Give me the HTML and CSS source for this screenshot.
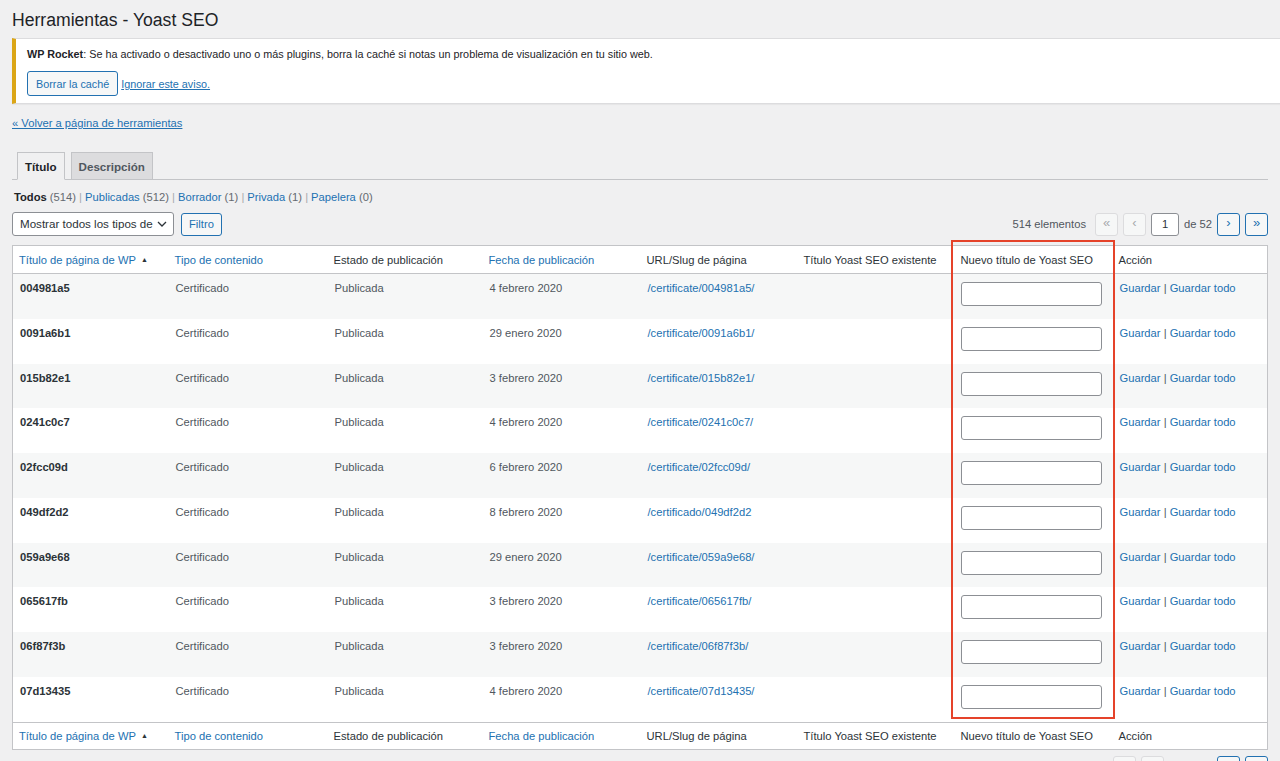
FILE: index.html
```html
<!DOCTYPE html>
<html lang="es">
<head>
<meta charset="utf-8">
<title>Herramientas - Yoast SEO</title>
<link rel="stylesheet" href="styles.css">
</head>
<body>
<div class="wrap">
  <h1 class="page-title">Herramientas - Yoast SEO</h1>

  <div class="notice">
    <p class="notice-text"><strong>WP Rocket</strong>: Se ha activado o desactivado uno o más plugins, borra la caché si notas un problema de visualización en tu sitio web.</p>
    <div class="notice-actions">
      <a class="button" href="#">Borrar la caché</a>
      <a class="dismiss" href="#">Ignorar este aviso.</a>
    </div>
  </div>

  <p class="back"><a href="#">« Volver a página de herramientas</a></p>

  <nav class="tabs">
    <a class="tab active" href="#">Título</a>
    <a class="tab" href="#">Descripción</a>
  </nav>

  <ul class="subsubsub">
    <li><span class="current">Todos</span> <span class="count">(514)</span> <span class="sep">|</span></li>
    <li><a href="#">Publicadas</a> <span class="count">(512)</span> <span class="sep">|</span></li>
    <li><a href="#">Borrador</a> <span class="count">(1)</span> <span class="sep">|</span></li>
    <li><a href="#">Privada</a> <span class="count">(1)</span> <span class="sep">|</span></li>
    <li><a href="#">Papelera</a> <span class="count">(0)</span></li>
  </ul>

  <div class="tablenav">
    <div class="filters">
      <div class="select">
        <span>Mostrar todos los tipos de</span>
        <svg class="chev" width="10" height="6" viewBox="0 0 10 6"><path d="M1 1l4 4 4-4" fill="none" stroke="#2c3338" stroke-width="1.3"/></svg>
      </div>
      <a class="button" href="#">Filtro</a>
    </div>
    <div class="pagination">
      <span class="num">514 elementos</span>
      <span class="pbtn disabled">«</span>
      <span class="pbtn disabled">‹</span>
      <span class="pinput">1</span>
      <span class="of">de 52</span>
      <a class="pbtn" href="#">›</a>
      <a class="pbtn" href="#">»</a>
    </div>
  </div>

  <div class="table-wrap">
    <table class="list">
      <colgroup>
        <col class="c1"><col class="c2"><col class="c3"><col class="c4"><col class="c5"><col class="c6"><col class="c7"><col class="c8">
      </colgroup>
      <thead>
        <tr>
          <th><a href="#">Título de página de WP</a><span class="sort">▲</span></th>
          <th><a href="#">Tipo de contenido</a></th>
          <th>Estado de publicación</th>
          <th><a href="#">Fecha de publicación</a></th>
          <th>URL/Slug de página</th>
          <th>Título Yoast SEO existente</th>
          <th>Nuevo título de Yoast SEO</th>
          <th>Acción</th>
        </tr>
      </thead>
      <tbody>
        <tr><td class="t">004981a5</td><td>Certificado</td><td>Publicada</td><td>4 febrero 2020</td><td><a href="#">/certificate/004981a5/</a></td><td></td><td><span class="field"></span></td><td><a href="#">Guardar</a> | <a href="#">Guardar todo</a></td></tr>
        <tr><td class="t">0091a6b1</td><td>Certificado</td><td>Publicada</td><td>29 enero 2020</td><td><a href="#">/certificate/0091a6b1/</a></td><td></td><td><span class="field"></span></td><td><a href="#">Guardar</a> | <a href="#">Guardar todo</a></td></tr>
        <tr><td class="t">015b82e1</td><td>Certificado</td><td>Publicada</td><td>3 febrero 2020</td><td><a href="#">/certificate/015b82e1/</a></td><td></td><td><span class="field"></span></td><td><a href="#">Guardar</a> | <a href="#">Guardar todo</a></td></tr>
        <tr><td class="t">0241c0c7</td><td>Certificado</td><td>Publicada</td><td>4 febrero 2020</td><td><a href="#">/certificate/0241c0c7/</a></td><td></td><td><span class="field"></span></td><td><a href="#">Guardar</a> | <a href="#">Guardar todo</a></td></tr>
        <tr><td class="t">02fcc09d</td><td>Certificado</td><td>Publicada</td><td>6 febrero 2020</td><td><a href="#">/certificate/02fcc09d/</a></td><td></td><td><span class="field"></span></td><td><a href="#">Guardar</a> | <a href="#">Guardar todo</a></td></tr>
        <tr><td class="t">049df2d2</td><td>Certificado</td><td>Publicada</td><td>8 febrero 2020</td><td><a href="#">/certificado/049df2d2</a></td><td></td><td><span class="field"></span></td><td><a href="#">Guardar</a> | <a href="#">Guardar todo</a></td></tr>
        <tr><td class="t">059a9e68</td><td>Certificado</td><td>Publicada</td><td>29 enero 2020</td><td><a href="#">/certificate/059a9e68/</a></td><td></td><td><span class="field"></span></td><td><a href="#">Guardar</a> | <a href="#">Guardar todo</a></td></tr>
        <tr><td class="t">065617fb</td><td>Certificado</td><td>Publicada</td><td>3 febrero 2020</td><td><a href="#">/certificate/065617fb/</a></td><td></td><td><span class="field"></span></td><td><a href="#">Guardar</a> | <a href="#">Guardar todo</a></td></tr>
        <tr><td class="t">06f87f3b</td><td>Certificado</td><td>Publicada</td><td>3 febrero 2020</td><td><a href="#">/certificate/06f87f3b/</a></td><td></td><td><span class="field"></span></td><td><a href="#">Guardar</a> | <a href="#">Guardar todo</a></td></tr>
        <tr><td class="t">07d13435</td><td>Certificado</td><td>Publicada</td><td>4 febrero 2020</td><td><a href="#">/certificate/07d13435/</a></td><td></td><td><span class="field"></span></td><td><a href="#">Guardar</a> | <a href="#">Guardar todo</a></td></tr>
      </tbody>
      <tfoot>
        <tr>
          <th><a href="#">Título de página de WP</a><span class="sort">▲</span></th>
          <th><a href="#">Tipo de contenido</a></th>
          <th>Estado de publicación</th>
          <th><a href="#">Fecha de publicación</a></th>
          <th>URL/Slug de página</th>
          <th>Título Yoast SEO existente</th>
          <th>Nuevo título de Yoast SEO</th>
          <th>Acción</th>
        </tr>
      </tfoot>
    </table>
    <div class="highlight"></div>
  </div>

  <div class="tablenav bottom">
    <div class="pagination">
      <span class="pbtn disabled">«</span>
      <span class="pbtn disabled">‹</span>
      <span class="of">1 de 52</span>
      <a class="pbtn" href="#">›</a>
      <a class="pbtn" href="#">»</a>
    </div>
  </div>
</div>
</body>
</html>
```

FILE: styles.css
```css
html, body {
  margin: 0;
  padding: 0;
  background: #f0f0f1;
  overflow: hidden;
}
body {
  font-family: "Liberation Sans", Arial, sans-serif;
  font-size: 11.2px;
  line-height: 14px;
  color: #2c3338;
}
a { color: #2271b1; text-decoration: none; }

.wrap {
  padding: 0 12px;
}

.page-title {
  margin: 0;
  padding: 9px 0 0;
  font-size: 17.6px;
  line-height: 22px;
  font-weight: 400;
  color: #1d2327;
}

.notice {
  margin: 7px -20px 0 0;
  background: #fff;
  border: 1px solid #dcdcde;
  border-left: 4px solid #dba617;
  padding: 8px 10px 7px 11px;
  box-shadow: 0 1px 1px rgba(0,0,0,0.04);
}
.notice-text {
  margin: 0;
  color: #1d2327;
  font-size: 10.8px;
}
.notice-text strong { font-weight: 700; }
.notice-actions {
  display: flex;
  align-items: center;
  gap: 3px;
  margin-top: 10px;
  font-size: 10.8px;
}
.button {
  display: inline-flex;
  align-items: center;
  box-sizing: border-box;
  height: 25px;
  padding: 0 8px;
  border: 1px solid #2271b1;
  border-radius: 3px;
  background: #f6f7f7;
  color: #2271b1;
}
.dismiss { text-decoration: underline; }

.back {
  margin: 12px 0 0;
}
.back a { text-decoration: underline; }

.tabs {
  display: flex;
  gap: 6px;
  margin-top: 22px;
  padding-left: 5px;
  border-bottom: 1px solid #c3c4c7;
}
.tab {
  display: block;
  box-sizing: border-box;
  height: 28px;
  margin-bottom: -1px;
  padding: 7px 7px 0;
  border: 1px solid #c3c4c7;
  background: #dcdcde;
  color: #50575e;
  font-weight: 700;
  font-size: 11.6px;
}
.tab.active {
  background: #f0f0f1;
  border-bottom-color: #f0f0f1;
  color: #1d2327;
}

.subsubsub {
  display: flex;
  list-style: none;
  margin: 10px 0 0 2px;
  padding: 0;
  color: #646970;
}
.subsubsub li { margin-right: 3px; white-space: pre; }
.subsubsub .current { font-weight: 700; color: #1d2327; }
.subsubsub .sep { color: #a7aaad; }

.tablenav {
  display: flex;
  align-items: center;
  justify-content: space-between;
  margin-top: 8px;
  height: 24px;
}
.filters {
  display: flex;
  align-items: center;
  gap: 7px;
}
.select {
  box-sizing: border-box;
  width: 162px;
  height: 24px;
  display: flex;
  align-items: center;
  justify-content: space-between;
  padding: 0 6px 0 7px;
  background: #fff;
  border: 1px solid #8c8f94;
  border-radius: 3px;
  color: #2c3338;
  font-size: 11.6px;
  white-space: nowrap;
  overflow: hidden;
}
.filters .button { height: 23px; padding: 0 7px; }

.pagination {
  display: flex;
  align-items: center;
  gap: 5px;
}
.pagination .num { margin-right: 4px; color: #50575e; }
.pbtn {
  box-sizing: border-box;
  width: 23px;
  height: 23px;
  display: inline-flex;
  align-items: center;
  justify-content: center;
  border: 1px solid #2271b1;
  border-radius: 3px;
  background: #f6f7f7;
  color: #2271b1;
  font-size: 13px;
  padding-bottom: 2px;
}
.pbtn.disabled {
  border-color: #dcdcde;
  color: #a7aaad;
}
.pinput {
  box-sizing: border-box;
  width: 28px;
  height: 23px;
  display: inline-flex;
  align-items: center;
  justify-content: center;
  border: 1px solid #8c8f94;
  border-radius: 3px;
  background: #fff;
  color: #2c3338;
}
.of { color: #50575e; }

.table-wrap {
  position: relative;
  margin-top: 9px;
}
.list {
  width: 100%;
  table-layout: fixed;
  border-collapse: collapse;
  border: 1px solid #c3c4c7;
  background: #fff;
}
.c1 { width: 156px; }
.c2 { width: 159px; }
.c3 { width: 155px; }
.c4 { width: 158px; }
.c5 { width: 157px; }
.c6 { width: 157px; }
.c7 { width: 158px; }
.list th {
  text-align: left;
  font-weight: 400;
  color: #2c3338;
  padding: 7px 6px 6px;
  height: 14px;
  white-space: nowrap;
}
.list thead th { border-bottom: 1px solid #c3c4c7; }
.list tfoot th { border-top: 1px solid #c3c4c7; padding: 6px 6px 6px; }
.sort {
  font-size: 7px;
  margin-left: 5px;
  vertical-align: 2px;
  color: #2c3338;
}
.list td {
  padding: 7px 7px 13.75px;
  vertical-align: top;
  color: #50575e;
  white-space: nowrap;
}
.list td.t { font-weight: 700; color: #2c3338; }
.list tbody tr:nth-child(odd) { background: #f6f7f7; }
.list td a { color: #2271b1; }
.field {
  display: block;
  box-sizing: border-box;
  width: 141px;
  height: 24px;
  margin-top: 1px;
  margin-left: -1px;
  margin-bottom: -1px;
  background: #fff;
  border: 1px solid #8c8f94;
  border-radius: 3px;
}

.highlight {
  position: absolute;
  left: 939px;
  top: -5px;
  width: 164px;
  height: 479px;
  box-sizing: border-box;
  border: 2px solid #e5432a;
  pointer-events: none;
}

.tablenav.bottom {
  justify-content: flex-end;
  margin-top: 6px;
}
.tablenav.bottom .of { margin: 0 3px; }
```
